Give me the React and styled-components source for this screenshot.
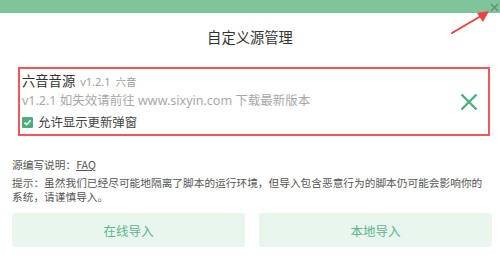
import React from 'react'
import styled, { createGlobalStyle } from 'styled-components'

const GlobalStyle = createGlobalStyle`
  html, body {
    margin: 0;
    padding: 0;
    background: #fff;
  }
  body {
    width: 500px;
    height: 255px;
    overflow: hidden;
    font-family: "Noto Sans", "Noto Sans CJK SC", sans-serif;
  }
`

const Dialog = styled.div`
  position: relative;
  width: 500px;
  height: 255px;
  background: #fff;
  display: flex;
  flex-direction: column;
`
const TopBar = styled.div`
  height: 13px;
  background: #80c49c;
  display: flex;
  justify-content: flex-end;
  align-items: flex-start;
`
const CloseBtn = styled.button`
  width: 12px;
  height: 12px;
  margin: 1px 0 0 0;
  padding: 0;
  border: none;
  background: none;
  display: flex;
  align-items: center;
  justify-content: center;
  cursor: pointer;
`
const Title = styled.h1`
  margin: 0;
  padding-top: 13px;
  font-size: 14.3px;
  line-height: 21px;
  font-weight: 400;
  color: #333;
  text-align: center;
  font-family: "Noto Sans CJK SC", sans-serif;
`
const Item = styled.div`
  margin: 20px 10px 0 18px;
  border: 2px solid #f25656;
  padding: 2px 10px 2px 2px;
  display: flex;
  align-items: center;
`
const Info = styled.div`
  flex: 1;
  display: flex;
  flex-direction: column;
`
const NameRow = styled.div`
  display: flex;
  align-items: baseline;
  line-height: 20px;
  height: 20px;
`
const Name = styled.span`
  font-size: 13.3px;
  color: #333;
  font-family: "Noto Sans CJK SC", sans-serif;
`
const Meta = styled.span`
  font-size: ${p => p.$size || 11}px;
  color: #a0a0a0;
  margin-left: 5px;
`
const Desc = styled.div`
  font-size: 12.5px;
  line-height: 20px;
  color: #a8a8a8;
`
const CheckRow = styled.label`
  display: flex;
  align-items: center;
  gap: 5px;
  height: 20px;
  margin-top: 1px;
  font-size: 12.4px;
  color: #444;
  font-family: "Noto Sans CJK SC", sans-serif;
`
const Box = styled.span`
  width: 11px;
  height: 11px;
  border-radius: 1px;
  background: #4cae7a;
  display: flex;
  align-items: center;
  justify-content: center;
`
const RemoveBtn = styled.button`
  border: none;
  background: none;
  padding: 0;
  width: 18px;
  height: 18px;
  display: flex;
  align-items: center;
  justify-content: center;
  cursor: pointer;
`
const Notes = styled.div`
  padding: 0 10px 0 12px;
  margin-top: 22px;
  font-size: 10.7px;
  color: #555;
  font-family: "Noto Sans CJK SC", sans-serif;
`
const NoteLine = styled.p`
  margin: 0 0 4px 0;
  line-height: 14px;
`
const Link = styled.a`
  color: #555;
  text-decoration: underline;
`
const Actions = styled.div`
  margin-top: auto;
  padding: 0 8px 8px 12px;
  display: grid;
  grid-template-columns: 1fr 1fr;
  gap: 14px;
`
const ActionBtn = styled.button`
  height: 34px;
  border: none;
  border-radius: 3px;
  background: #e8f6ee;
  color: #5fb58a;
  font-size: 12.5px;
  font-family: "Noto Sans CJK SC", sans-serif;
  cursor: pointer;
`
const Arrow = styled.svg`
  position: absolute;
  left: 448px;
  top: 8px;
  pointer-events: none;
`

const App = () => {
  return (
    <Dialog>
      <GlobalStyle />
      <TopBar>
        <CloseBtn>
          <svg width="9" height="9" viewBox="0 0 9 9">
            <path d="M1 1 L8 8 M8 1 L1 8" stroke="#5f8f74" strokeWidth="1.4" fill="none" />
          </svg>
        </CloseBtn>
      </TopBar>
      <Title>自定义源管理</Title>
      <Item>
        <Info>
          <NameRow>
            <Name>六音音源</Name>
            <Meta>v1.2.1</Meta>
            <Meta $size={10.5}>六音</Meta>
          </NameRow>
          <Desc>v1.2.1 如失效请前往 www.sixyin.com 下载最新版本</Desc>
          <CheckRow>
            <Box>
              <svg width="9" height="9" viewBox="0 0 9 9">
                <path d="M1.5 4.6 L3.7 6.7 L7.6 2.3" stroke="#fff" strokeWidth="1.6" fill="none" />
              </svg>
            </Box>
            允许显示更新弹窗
          </CheckRow>
        </Info>
        <RemoveBtn>
          <svg width="18" height="18" viewBox="0 0 18 18">
            <path d="M1.5 1.5 L16.5 16.5 M16.5 1.5 L1.5 16.5" stroke="#4caf7d" strokeWidth="2.4" fill="none" />
          </svg>
        </RemoveBtn>
      </Item>
      <Notes>
        <NoteLine>源编写说明：<Link>FAQ</Link></NoteLine>
        <NoteLine>提示：虽然我们已经尽可能地隔离了脚本的运行环境，但导入包含恶意行为的脚本仍可能会影响你的系统，请谨慎导入。</NoteLine>
      </Notes>
      <Actions>
        <ActionBtn>在线导入</ActionBtn>
        <ActionBtn>本地导入</ActionBtn>
      </Actions>
      <Arrow width="46" height="30" viewBox="0 0 46 30">
        <path d="M4 25 L33 8" stroke="#ef4040" strokeWidth="2" strokeLinecap="round" fill="none" />
        <path d="M41 3 L29 5 L35 14 Z" fill="#ef4040" />
      </Arrow>
    </Dialog>
  )
}

export default App
